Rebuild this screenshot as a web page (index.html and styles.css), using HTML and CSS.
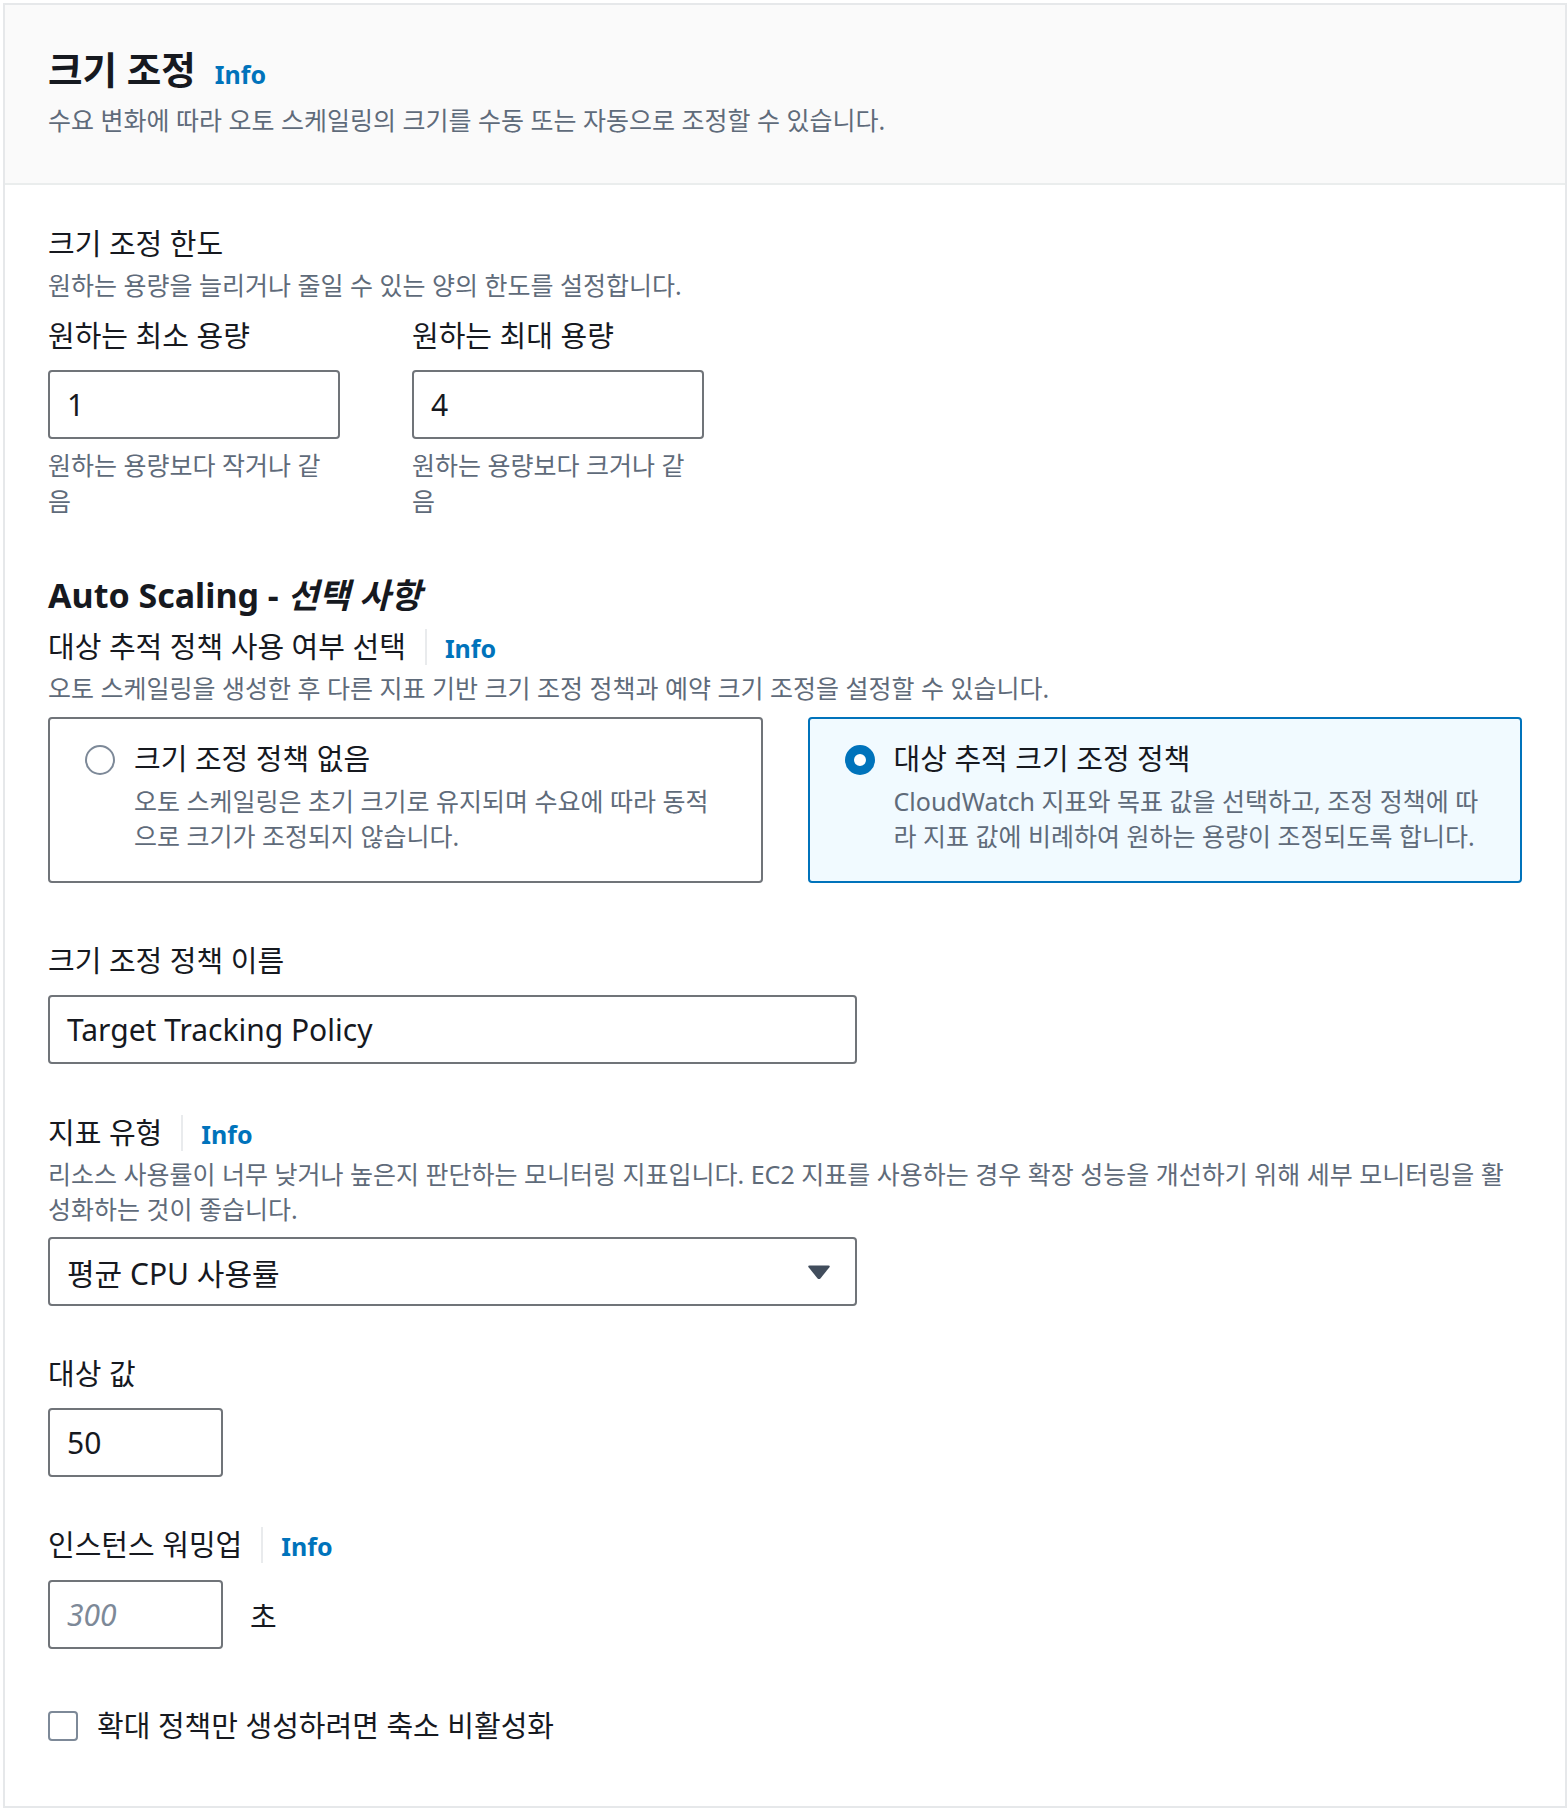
FILE: index.html
```html
<!DOCTYPE html>
<html lang="ko">
<head>
<meta charset="utf-8">
<title>크기 조정</title>
<link rel="stylesheet" href="styles.css">
</head>
<body>
<div class="container">
  <div class="header">
    <h2 class="title"><span>크기 조정</span><a class="info info-title">Info</a></h2>
    <p class="desc header-desc">수요 변화에 따라 오토 스케일링의 크기를 수동 또는 자동으로 조정할 수 있습니다.</p>
  </div>
  <div class="content">
    <div class="label">크기 조정 한도</div>
    <div class="desc mt6">원하는 용량을 늘리거나 줄일 수 있는 양의 한도를 설정합니다.</div>
    <div class="limits">
      <div class="field">
        <div class="label">원하는 최소 용량</div>
        <div class="input">1</div>
        <div class="constraint">원하는 용량보다 작거나 같음</div>
      </div>
      <div class="field">
        <div class="label">원하는 최대 용량</div>
        <div class="input">4</div>
        <div class="constraint">원하는 용량보다 크거나 같음</div>
      </div>
    </div>

    <h3 class="section-title">Auto Scaling - <i>선택 사항</i></h3>
    <div class="label-row mt13"><span class="label">대상 추적 정책 사용 여부 선택</span><span class="divider"></span><a class="info">Info</a></div>
    <div class="desc mt6">오토 스케일링을 생성한 후 다른 지표 기반 크기 조정 정책과 예약 크기 조정을 설정할 수 있습니다.</div>
    <div class="tiles">
      <div class="tile">
        <span class="radio"></span>
        <div class="tile-text">
          <div class="label">크기 조정 정책 없음</div>
          <div class="desc tile-desc">오토 스케일링은 초기 크기로 유지되며 수요에 따라 동적으로 크기가 조정되지 않습니다.</div>
        </div>
      </div>
      <div class="tile tile-selected">
        <span class="radio radio-checked"></span>
        <div class="tile-text">
          <div class="label">대상 추적 크기 조정 정책</div>
          <div class="desc tile-desc">CloudWatch 지표와 목표 값을 선택하고, 조정 정책에 따라 지표 값에 비례하여 원하는 용량이 조정되도록 합니다.</div>
        </div>
      </div>
    </div>

    <div class="label mt60">크기 조정 정책 이름</div>
    <div class="input input-wide">Target Tracking Policy</div>

    <div class="label-row mt51"><span class="label">지표 유형</span><span class="divider"></span><a class="info">Info</a></div>
    <div class="desc mt6">리소스 사용률이 너무 낮거나 높은지 판단하는 모니터링 지표입니다. EC2 지표를 사용하는 경우 확장 성능을 개선하기 위해 세부 모니터링을 활성화하는 것이 좋습니다.</div>
    <div class="input input-wide select">
      <span>평균 CPU 사용률</span>
      <svg class="caret" width="24" height="16" viewBox="0 0 24 16"><path d="M2.5 1.5 H21.5 Q23.5 1.5 22.4 3.3 L13.6 14.2 Q12 16 10.4 14.2 L1.6 3.3 Q0.5 1.5 2.5 1.5 Z" fill="#414d5c"/></svg>
    </div>

    <div class="label mt50">대상 값</div>
    <div class="input input-small">50</div>

    <div class="label-row mt50"><span class="label">인스턴스 워밍업</span><span class="divider"></span><a class="info">Info</a></div>
    <div class="warmup-row">
      <div class="input input-small placeholder">300</div>
      <span class="unit">초</span>
    </div>

    <div class="checkbox-row">
      <span class="checkbox"></span>
      <span class="label">확대 정책만 생성하려면 축소 비활성화</span>
    </div>
  </div>
</div>
</body>
</html>
```

FILE: styles.css
```css
* { box-sizing: border-box; }

body {
  margin: 0;
  background: #ffffff;
  font-family: "Noto Sans", "Noto Sans CJK KR", sans-serif;
  color: #16191f;
}

.container {
  margin: 3px 0 0 3px;
  width: 1564px;
  border: 2px solid #e6e8ea;
  background: #ffffff;
}

.header {
  background: #fafafa;
  border-bottom: 2px solid #eaeded;
  padding: 44px 43px 45px;
}

.title {
  margin: 0;
  font-size: 37.5px;
  line-height: 42px;
  font-weight: 700;
  color: #16191f;
  display: flex;
  align-items: baseline;
}

.info {
  color: #0073bb;
  font-weight: 700;
  font-size: 25px;
  text-decoration: none;
}

.info-title {
  margin-left: 19px;
}

.desc {
  margin: 0;
  font-size: 25px;
  line-height: 35px;
  color: #5f6b7a;
}

.header-desc {
  margin-top: 8px;
}

.content {
  padding: 41px 43px 62px;
}

.label {
  font-size: 29px;
  line-height: 36px;
  color: #16191f;
}

.mt6 { margin-top: 6px; }
.mt13 { margin-top: 13px; }
.mt50 { margin-top: 50px; }
.mt51 { margin-top: 51px; }
.mt60 { margin-top: 60px; }

.limits {
  display: flex;
  gap: 72px;
  margin-top: 15px;
}

.field {
  width: 292px;
}

.input {
  margin-top: 16px;
  height: 69px;
  border: 2px solid #707479;
  border-radius: 4px;
  background: #ffffff;
  padding: 0 17px;
  display: flex;
  align-items: center;
  font-size: 30px;
  color: #16191f;
}

.constraint {
  margin-top: 8px;
  font-size: 25px;
  line-height: 36px;
  color: #5f6b7a;
}

.section-title {
  margin: 55px 0 0;
  font-size: 34px;
  line-height: 42px;
  font-weight: 700;
  color: #16191f;
}

.section-title i {
  font-style: italic;
}

.label-row {
  display: flex;
  align-items: baseline;
}

.divider {
  align-self: center;
  width: 2px;
  height: 36px;
  background: #e9ebed;
  margin: 0 18px 0 19px;
}

.tiles {
  margin-top: 11px;
  display: flex;
  gap: 45px;
}

.tile {
  flex: 1;
  height: 166px;
  border: 2px solid #707479;
  border-radius: 4px;
  padding: 22px 34px 27px 35px;
  display: flex;
  gap: 19px;
  align-items: flex-start;
}

.tile-selected {
  border-color: #0073bb;
  background: #f1faff;
}

.radio {
  flex: none;
  width: 30px;
  height: 30px;
  margin-top: 4px;
  border: 2px solid #7d8998;
  border-radius: 50%;
  background: #ffffff;
}

.radio-checked {
  border: 9.5px solid #0073bb;
}

.tile-desc {
  margin-top: 7px;
}

.input-wide {
  width: 809px;
}

.select {
  margin-top: 10px;
  justify-content: space-between;
  padding-right: 24px;
}

.caret {
  display: block;
}

.input-small {
  width: 175px;
}

.warmup-row {
  display: flex;
  align-items: center;
  gap: 27px;
  margin-top: 17px;
}

.warmup-row .input {
  margin-top: 0;
}

.placeholder {
  font-style: italic;
  color: #7d8998;
}

.unit {
  font-size: 29px;
  color: #16191f;
}

.checkbox-row {
  margin-top: 59px;
  display: flex;
  align-items: center;
  gap: 19px;
}

.checkbox {
  width: 30px;
  height: 30px;
  border: 2px solid #7d8998;
  border-radius: 4px;
  background: #ffffff;
}
```
